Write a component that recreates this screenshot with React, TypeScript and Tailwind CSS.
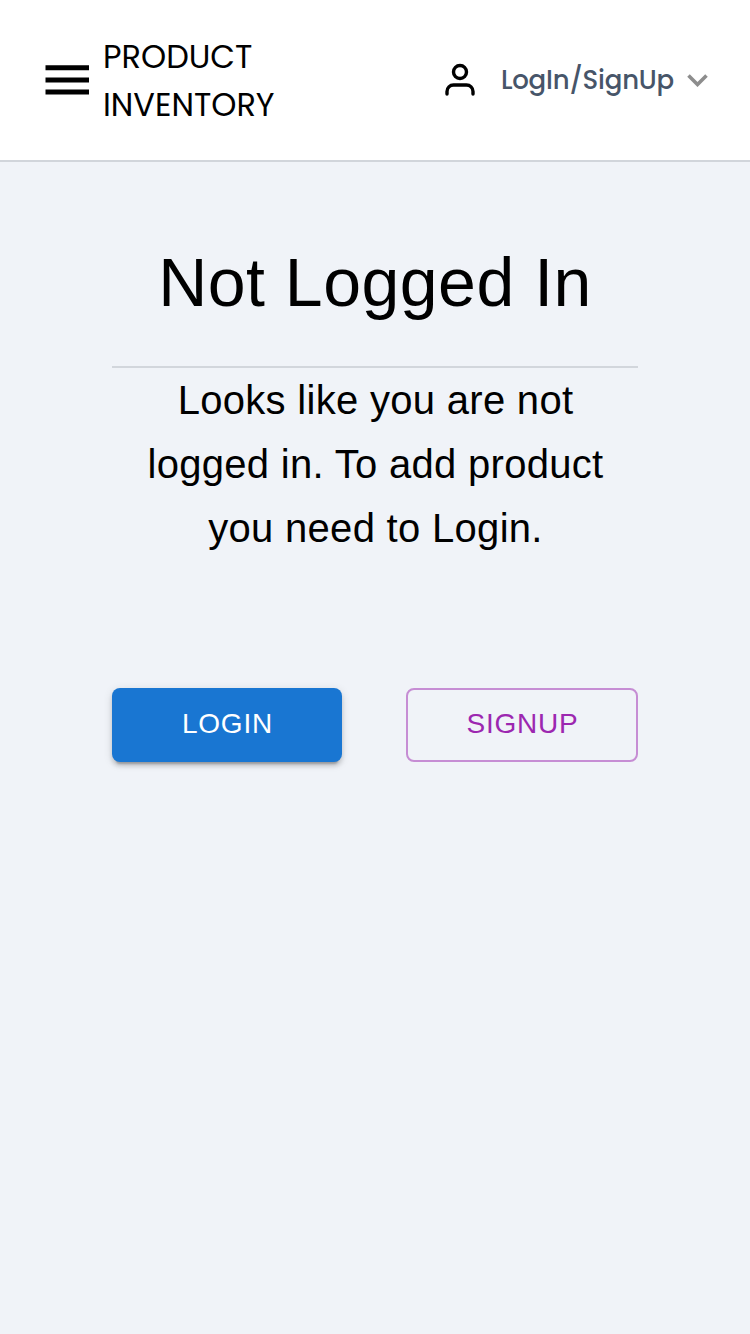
export default function App() {
  return (
    <div className="flex min-h-screen flex-col bg-[#f0f3f8] font-['Liberation_Sans',Arial,sans-serif] text-black">
      <header className="flex h-[162px] items-center justify-between border-b-2 border-[#d1d5db] bg-white pr-[41px] pl-[45px] font-['Poppins',Inter,sans-serif]">
        <div className="flex items-center">
          <svg className="h-[30px] w-11" viewBox="0 0 44 30" fill="currentColor" aria-hidden="true">
            <path d="M0.5 0.3h43.5v5h-43.5zM0.5 12.4h43.5v5h-43.5zM0.5 24.5h43.5v5h-43.5z" />
          </svg>
          <div className="ml-[14px] pt-px text-[32px] leading-[48px]">
            <span className="block w-fit">PRODUCT</span>
            <span className="block w-fit">INVENTORY</span>
          </div>
        </div>
        <div className="flex items-center">
          <svg className="h-[34px] w-8" viewBox="0 0 32 34" fill="none" stroke="currentColor" strokeWidth="3.4" strokeLinecap="round" aria-hidden="true">
            <circle cx="16" cy="9" r="6.5" />
            <path d="M3 31v-2.5a6.5 6.5 0 0 1 6.5-6.5h13a6.5 6.5 0 0 1 6.5 6.5V31" />
          </svg>
          <span className="ml-[25px] text-[26px] leading-[38px] font-medium tracking-[-0.2px] text-[#475569]">LogIn/SignUp</span>
          <svg className="ml-[13px] h-[14px] w-[22px]" viewBox="0 0 22 14" fill="none" stroke="#8d8d8d" strokeWidth="3.6" aria-hidden="true">
            <path d="M1.5 2.5l9 9 9-9" />
          </svg>
        </div>
      </header>
      <main className="mx-[112px] mt-[78px] flex w-[526px] flex-col text-center">
        <h1 className="h-[128px] border-b-2 border-[#d2d6dc] text-[68px] leading-[84px] tracking-[0.5px]">Not Logged In</h1>
        <p className="pl-px text-[40px] leading-[64px] tracking-[0.3px]">
          Looks like you are not
          <br />
          logged in. To add product
          <br />
          you need to Login.
        </p>
        <div className="mt-[128px] flex justify-between">
          <button className="h-[74px] w-[230px] rounded-lg bg-[#1976d2] pb-[3px] pl-px text-[28px] tracking-[0.8px] text-white shadow-[0_6px_2px_-4px_rgba(0,0,0,0.2),0_4px_4px_0_rgba(0,0,0,0.14),0_2px_10px_0_rgba(0,0,0,0.12)]">LOGIN</button>
          <button className="h-[74px] w-[232px] rounded-lg border-2 border-[#9c27b0]/50 pb-[3px] pl-px text-[28px] tracking-[0.8px] text-[#9c27b0]">SIGNUP</button>
        </div>
      </main>
    </div>
  );
}
